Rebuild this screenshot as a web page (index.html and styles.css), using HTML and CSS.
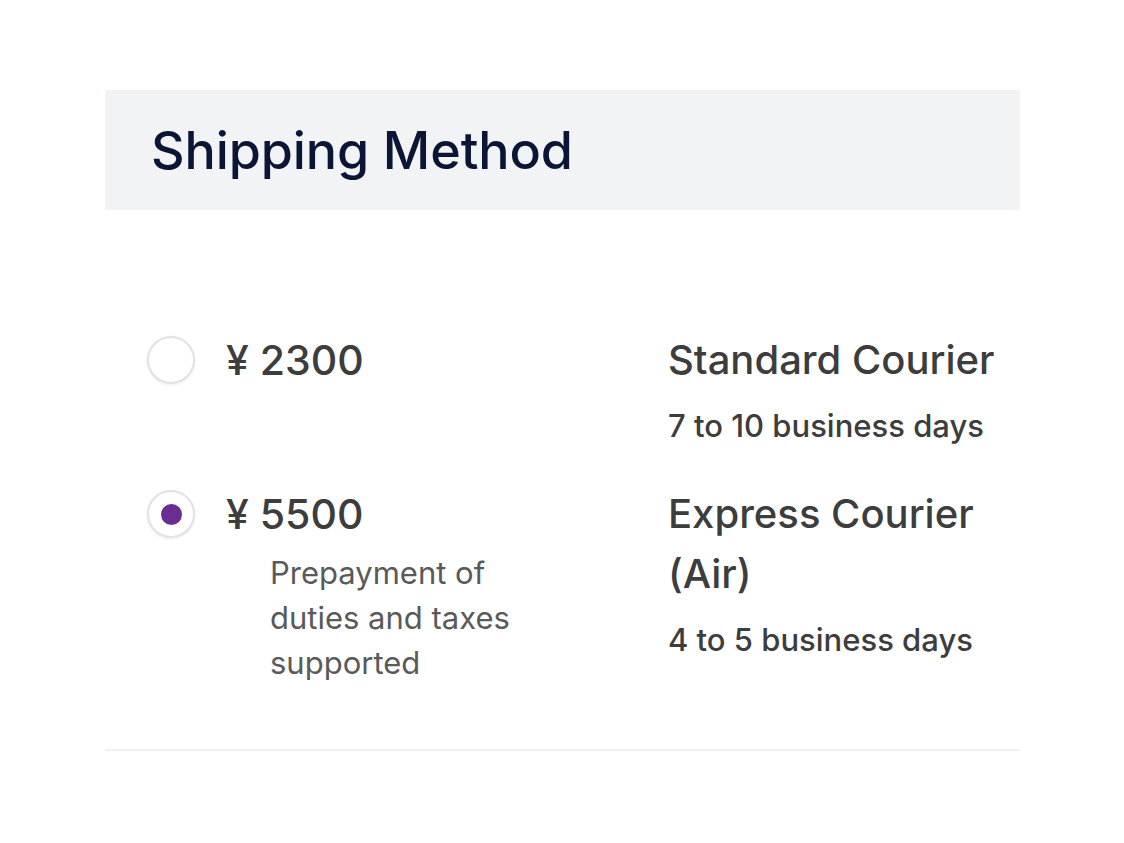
FILE: index.html
```html
<!DOCTYPE html>
<html>
<head>
<meta charset="utf-8">
<link rel="stylesheet" href="styles.css">
</head>
<body>
<div class="panel">
  <div class="header"><h1 class="title">Shipping Method</h1></div>
  <div class="options">
    <div class="option">
      <div class="left">
        <span class="radio"></span>
        <div class="price-block">
          <div class="price">¥ 2300</div>
        </div>
      </div>
      <div class="right">
        <div class="name">Standard Courier</div>
        <div class="days">7 to 10 business days</div>
      </div>
    </div>
    <div class="option">
      <div class="left">
        <span class="radio checked"></span>
        <div class="price-block">
          <div class="price">¥ 5500</div>
          <div class="note">Prepayment of duties and taxes supported</div>
        </div>
      </div>
      <div class="right">
        <div class="name">Express Courier (Air)</div>
        <div class="days">4 to 5 business days</div>
      </div>
    </div>
  </div>
  <div class="divider"></div>
</div>
</body>
</html>
```
FILE: styles.css
```css
html, body { margin: 0; padding: 0; background: #fff; }
body { font-family: Inter, "Liberation Sans", sans-serif; color: #3d3d3d; }
.panel { width: 915px; margin-left: 105px; padding-top: 90px; }
.header { background: #f2f3f5; height: 120px; display: flex; align-items: center; padding-left: 46px; box-sizing: border-box; }
.title { margin: 0; font-size: 52px; font-weight: 500; color: #0b1536; letter-spacing: -0.1px; }
.options { padding: 120px 0 0 42px; display: flex; flex-direction: column; gap: 38px; }
.option { display: flex; }
.left { width: 521px; display: flex; align-items: flex-start; gap: 31px; }
.radio { width: 48px; height: 48px; border-radius: 50%; border: 2px solid #e3e0e8; box-sizing: border-box; flex: none; display: flex; align-items: center; justify-content: center; margin-top: 6px; box-shadow: 0 1px 3px rgba(0,0,0,0.08); }
.radio.checked::after { content: ""; width: 21px; height: 21px; border-radius: 50%; background: #6b2d92; }
.price { font-size: 41px; line-height: 60px; font-weight: 500; color: #3d3d3d; }
.note { margin-left: 44px; margin-top: 6px; width: 270px; font-size: 31px; line-height: 45px; color: #5a5a5a; }
.right { flex: 1; }
.name { font-size: 40px; line-height: 60px; font-weight: 500; color: #3d3d3d; width: 340px; }
.days { font-size: 31px; line-height: 40px; font-weight: 500; color: #3d3d3d; margin-top: 16px; }
.divider { margin-top: 64px; height: 2px; background: #f0f0f0; }
```
